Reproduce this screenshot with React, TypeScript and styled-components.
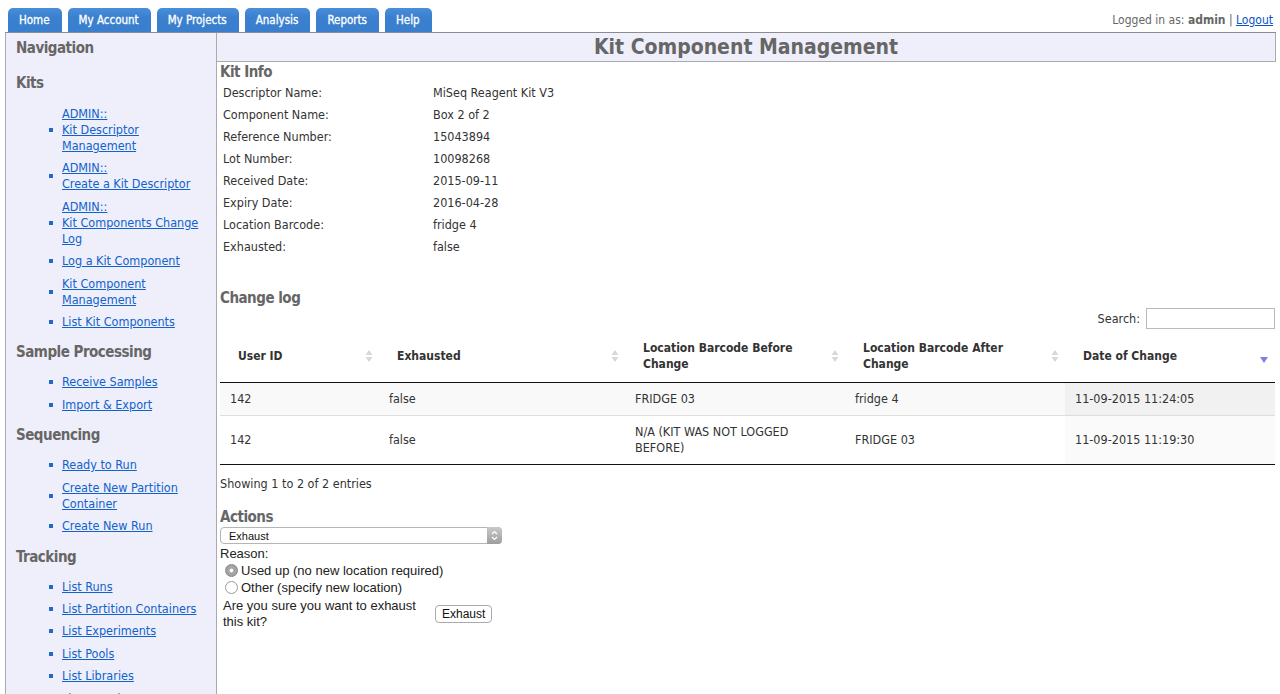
import React from 'react';
import styled, { createGlobalStyle } from 'styled-components';

const GlobalStyle = createGlobalStyle`
  html, body {
    margin: 0;
    padding: 0;
    background: #fff;
  }
  body {
    font-family: "DejaVu Sans Condensed", "DejaVu Sans", sans-serif;
    font-size: 12.5px;
    color: #333;
  }
`;

const Page = styled.div`
  padding: 8px 4px 0 5px;
`;

const TopBar = styled.div`
  display: flex;
  justify-content: space-between;
  align-items: flex-end;
  height: 24px;
  padding: 0 3px;
`;

const Tabs = styled.div`
  display: flex;
  gap: 6px;
  height: 24px;
`;

const Tab = styled.a`
  display: flex;
  align-items: center;
  padding: 0 12px 1px 11px;
  height: 24px;
  box-sizing: border-box;
  border-radius: 5px 5px 0 0;
  background: linear-gradient(#4a8ed9, #3a80cf 40%, #3a7fce);
  color: #fff;
  font-size: 11.5px;
  -webkit-text-stroke: 0.3px #fff;
  text-decoration: none;
`;

const LoginInfo = styled.div`
  color: #666;
  font-size: 12px;
  align-self: center;
  b { font-weight: bold; }
  a { color: #0b52c8; text-decoration: underline; }
`;

const Layout = styled.div`
  display: grid;
  grid-template-columns: 212px 1fr;
  border-top: 1px solid #8c8c8c;
  min-height: 700px;
`;

const Sidebar = styled.nav`
  background: #efeffb;
  border-left: 1px solid #aaa;
  border-right: 1px solid #aaa;
  padding: 5px 8px 0 10px;
`;

const NavHeading = styled.div<{ $first?: boolean }>`
  font-size: 15px;
  letter-spacing: -0.5px;
  font-weight: bold;
  line-height: 20px;
  color: #666;
  margin-bottom: ${p => (p.$first ? '15px' : '0')};
`;

const NavList = styled.ul<{ $top: number }>`
  list-style: none;
  margin: ${p => p.$top}px 0 12.5px;
  padding: 0 0 0 33px;
  display: flex;
  flex-direction: column;
  gap: 6.4px;
`;

const NavItem = styled.li`
  display: flex;
  align-items: center;
  line-height: 16px;
  &::before {
    content: '';
    flex: none;
    width: 4px;
    height: 4px;
    background: #1f6ac6;
    margin-right: 9px;
  }
  a {
    color: #1062cc;
    text-decoration: underline;
  }
`;

const Main = styled.main`
  min-width: 0;
`;

const TitleBar = styled.div`
  background: #efeffb;
  border-right: 1px solid #aaa;
  border-bottom: 1px solid #aaa;
  height: 28px;
  text-align: center;
  font-size: 21px;
  font-weight: bold;
  line-height: 28px;
  color: #666;
`;

const Content = styled.div`
  padding: 0 1px 0 3px;
`;

const SectionHeading = styled.div<{ $top?: number }>`
  font-size: 15px;
  letter-spacing: -0.5px;
  font-weight: bold;
  line-height: 20px;
  color: #666;
  margin-top: ${p => p.$top ?? 0}px;
`;

const InfoTable = styled.table`
  border-collapse: collapse;
  margin-top: -1px;
  td {
    height: 22px;
    padding: 0 3px;
    vertical-align: middle;
  }
  td:first-child { width: 204px; }
`;

const SearchRow = styled.div`
  display: flex;
  justify-content: flex-end;
  align-items: center;
  gap: 6px;
  height: 21px;
  color: #333;
`;

const SearchInput = styled.input`
  width: 129px;
  height: 21px;
  box-sizing: border-box;
  border: 1px solid #bbb;
  padding: 0 4px;
  font-size: 12px;
`;

const LogTable = styled.table`
  width: 100%;
  table-layout: fixed;
  border-collapse: collapse;
  margin-top: 1px;
  th {
    text-align: left;
    font-weight: bold;
    font-size: 12px;
    padding: 10px 18px;
    line-height: 16px;
    border-bottom: 1px solid #111;
    position: relative;
    vertical-align: middle;
  }
  td {
    padding: 8px 10px;
    line-height: 16px;
    vertical-align: middle;
  }
  tbody tr + tr td {
    border-top: 1px solid #ddd;
  }
  tbody tr:last-child td {
    border-bottom: 1px solid #111;
  }
`;

const Row = styled.tr<{ $odd: boolean }>`
  background: ${p => (p.$odd ? '#f9f9f9' : '#fff')};
  td.sorted {
    background: ${p => (p.$odd ? '#f1f1f1' : '#fafafa')};
  }
`;

const SortIcon = styled.svg`
  position: absolute;
  right: 6px;
  top: 50%;
  transform: translateY(-50%);
`;

const TableInfo = styled.div`
  padding-top: 11px;
  line-height: 16px;
`;

const SelectWrap = styled.div`
  position: relative;
  width: 282px;
  height: 17px;
`;

const Select = styled.select`
  appearance: none;
  width: 100%;
  height: 17px;
  box-sizing: border-box;
  border: 1px solid #b5b5b5;
  border-radius: 4px;
  background: #fff;
  font-family: "Liberation Sans", Arial, sans-serif;
  font-size: 11px;
  padding: 0 0 0 8px;
  color: #111;
`;

const SelectArrows = styled.div`
  position: absolute;
  top: 0;
  right: 0;
  width: 15px;
  height: 17px;
  border-radius: 0 4px 4px 0;
  background: linear-gradient(#c9c9c9, #9e9e9e);
  display: flex;
  align-items: center;
  justify-content: center;
  pointer-events: none;
`;

const FormText = styled.div`
  font-family: "Liberation Sans", Arial, sans-serif;
  font-size: 13px;
  line-height: 16px;
  color: #222;
  margin-top: 2px;
`;

const RadioRow = styled.label`
  display: flex;
  align-items: center;
  gap: 3px;
  height: 17px;
  padding-left: 5px;
  font-family: "Liberation Sans", Arial, sans-serif;
  font-size: 13px;
  color: #222;
`;

const RadioDot = styled.span<{ $checked?: boolean }>`
  width: 13px;
  height: 13px;
  box-sizing: border-box;
  border-radius: 50%;
  border: 1px solid ${p => (p.$checked ? '#8a8a8a' : '#9a9a9a')};
  background: ${p =>
    p.$checked
      ? 'radial-gradient(circle, #fff 0 1.6px, #a9a9a9 2.2px, #9a9a9a 100%)'
      : '#fff'};
`;

const ConfirmTable = styled.table`
  border-collapse: collapse;
  margin-top: 2px;
  td {
    padding: 0 3px;
    vertical-align: middle;
    font-family: "Liberation Sans", Arial, sans-serif;
    font-size: 13px;
    line-height: 16px;
    color: #222;
  }
  td:first-child { width: 200px; }
  td:last-child { padding-left: 9px; }
`;

const Button = styled.button`
  height: 18px;
  padding: 0 6px;
  border: 1px solid #aaa;
  border-radius: 4px;
  background: #fff;
  font-family: "Liberation Sans", Arial, sans-serif;
  font-size: 12px;
  color: #111;
`;

const navSections = [
  {
    title: 'Kits',
    top: 13,
    items: [
      ['ADMIN::', 'Kit Descriptor Management'],
      ['ADMIN::', 'Create a Kit Descriptor'],
      ['ADMIN::', 'Kit Components Change Log'],
      ['Log a Kit Component'],
      ['Kit Component Management'],
      ['List Kit Components'],
    ],
  },
  {
    title: 'Sample Processing',
    top: 12,
    items: [['Receive Samples'], ['Import & Export']],
  },
  {
    title: 'Sequencing',
    top: 12,
    items: [['Ready to Run'], ['Create New Partition Container'], ['Create New Run']],
  },
  {
    title: 'Tracking',
    top: 12,
    items: [
      ['List Runs'],
      ['List Partition Containers'],
      ['List Experiments'],
      ['List Pools'],
      ['List Libraries'],
      ['List Samples'],
      ['List Studies'],
    ],
  },
];

const kitInfo = [
  ['Descriptor Name:', 'MiSeq Reagent Kit V3'],
  ['Component Name:', 'Box 2 of 2'],
  ['Reference Number:', '15043894'],
  ['Lot Number:', '10098268'],
  ['Received Date:', '2015-09-11'],
  ['Expiry Date:', '2016-04-28'],
  ['Location Barcode:', 'fridge 4'],
  ['Exhausted:', 'false'],
];

const columns = [
  { name: 'User ID', width: 159 },
  { name: 'Exhausted', width: 246 },
  { name: 'Location Barcode Before Change', width: 220 },
  { name: 'Location Barcode After Change', width: 220 },
  { name: 'Date of Change', width: 210, sorted: true },
];

const logRows = [
  ['142', 'false', 'FRIDGE 03', 'fridge 4', '11-09-2015 11:24:05'],
  ['142', 'false', 'N/A (KIT WAS NOT LOGGED BEFORE)', 'FRIDGE 03', '11-09-2015 11:19:30'],
];

const SortBoth = () => (
  <SortIcon width="8" height="14" viewBox="0 0 8 14">
    <path d="M4 1 L7.5 6 H0.5 Z" fill="#d8d8d8" />
    <path d="M4 13 L7.5 8 H0.5 Z" fill="#d8d8d8" />
  </SortIcon>
);

const SortDesc = () => (
  <SortIcon width="10" height="8" viewBox="0 0 10 8" style={{ marginTop: 4 }}>
    <path d="M1 1 H9 L5 7 Z" fill="#7f82dc" />
  </SortIcon>
);

const App: React.FC = () => {
  return (
    <Page>
      <GlobalStyle />
      <TopBar>
        <Tabs>
          {['Home', 'My Account', 'My Projects', 'Analysis', 'Reports', 'Help'].map(t => (
            <Tab key={t} href="#">{t}</Tab>
          ))}
        </Tabs>
        <LoginInfo>
          Logged in as: <b>admin</b> | <a href="#">Logout</a>
        </LoginInfo>
      </TopBar>

      <Layout>
        <Sidebar>
          <NavHeading $first>Navigation</NavHeading>
          {navSections.map(section => (
            <React.Fragment key={section.title}>
              <NavHeading>{section.title}</NavHeading>
              <NavList $top={section.top}>
                {section.items.map((lines, i) => (
                  <NavItem key={i}>
                    <a href="#">
                      {lines.length > 1 ? (
                        <>
                          {lines[0]}
                          <br />
                          {lines[1]}
                        </>
                      ) : (
                        lines[0]
                      )}
                    </a>
                  </NavItem>
                ))}
              </NavList>
            </React.Fragment>
          ))}
        </Sidebar>

        <Main>
          <TitleBar>Kit Component Management</TitleBar>
          <Content>
            <SectionHeading>Kit Info</SectionHeading>
            <InfoTable>
              <tbody>
                {kitInfo.map(([label, value]) => (
                  <tr key={label}>
                    <td>{label}</td>
                    <td>{value}</td>
                  </tr>
                ))}
              </tbody>
            </InfoTable>

            <SectionHeading $top={31}>Change log</SectionHeading>
            <SearchRow>
              <span>Search:</span>
              <SearchInput type="text" />
            </SearchRow>
            <LogTable>
              <colgroup>
                {columns.map(c => (
                  <col key={c.name} style={{ width: c.width }} />
                ))}
              </colgroup>
              <thead>
                <tr>
                  {columns.map(c => (
                    <th key={c.name}>
                      {c.name}
                      {c.sorted ? <SortDesc /> : <SortBoth />}
                    </th>
                  ))}
                </tr>
              </thead>
              <tbody>
                {logRows.map((r, i) => (
                  <Row key={i} $odd={i % 2 === 0}>
                    {r.map((cell, j) => (
                      <td key={j} className={j === 4 ? 'sorted' : undefined}>
                        {cell}
                      </td>
                    ))}
                  </Row>
                ))}
              </tbody>
            </LogTable>
            <TableInfo>Showing 1 to 2 of 2 entries</TableInfo>

            <SectionHeading $top={15}>Actions</SectionHeading>
            <SelectWrap>
              <Select defaultValue="exhaust">
                <option value="exhaust">Exhaust</option>
                <option value="relocate">Change location</option>
              </Select>
              <SelectArrows>
                <svg width="7" height="11" viewBox="0 0 7 11">
                  <path d="M1 4 L3.5 1.5 L6 4 M1 7 L3.5 9.5 L6 7" stroke="#fff" strokeWidth="1.2" fill="none" />
                </svg>
              </SelectArrows>
            </SelectWrap>
            <FormText>Reason:</FormText>
            <RadioRow>
              <RadioDot $checked />
              Used up (no new location required)
            </RadioRow>
            <RadioRow>
              <RadioDot />
              Other (specify new location)
            </RadioRow>
            <ConfirmTable>
              <tbody>
                <tr>
                  <td>Are you sure you want to exhaust this kit?</td>
                  <td>
                    <Button>Exhaust</Button>
                  </td>
                </tr>
              </tbody>
            </ConfirmTable>
          </Content>
        </Main>
      </Layout>
    </Page>
  );
};

export default App;
